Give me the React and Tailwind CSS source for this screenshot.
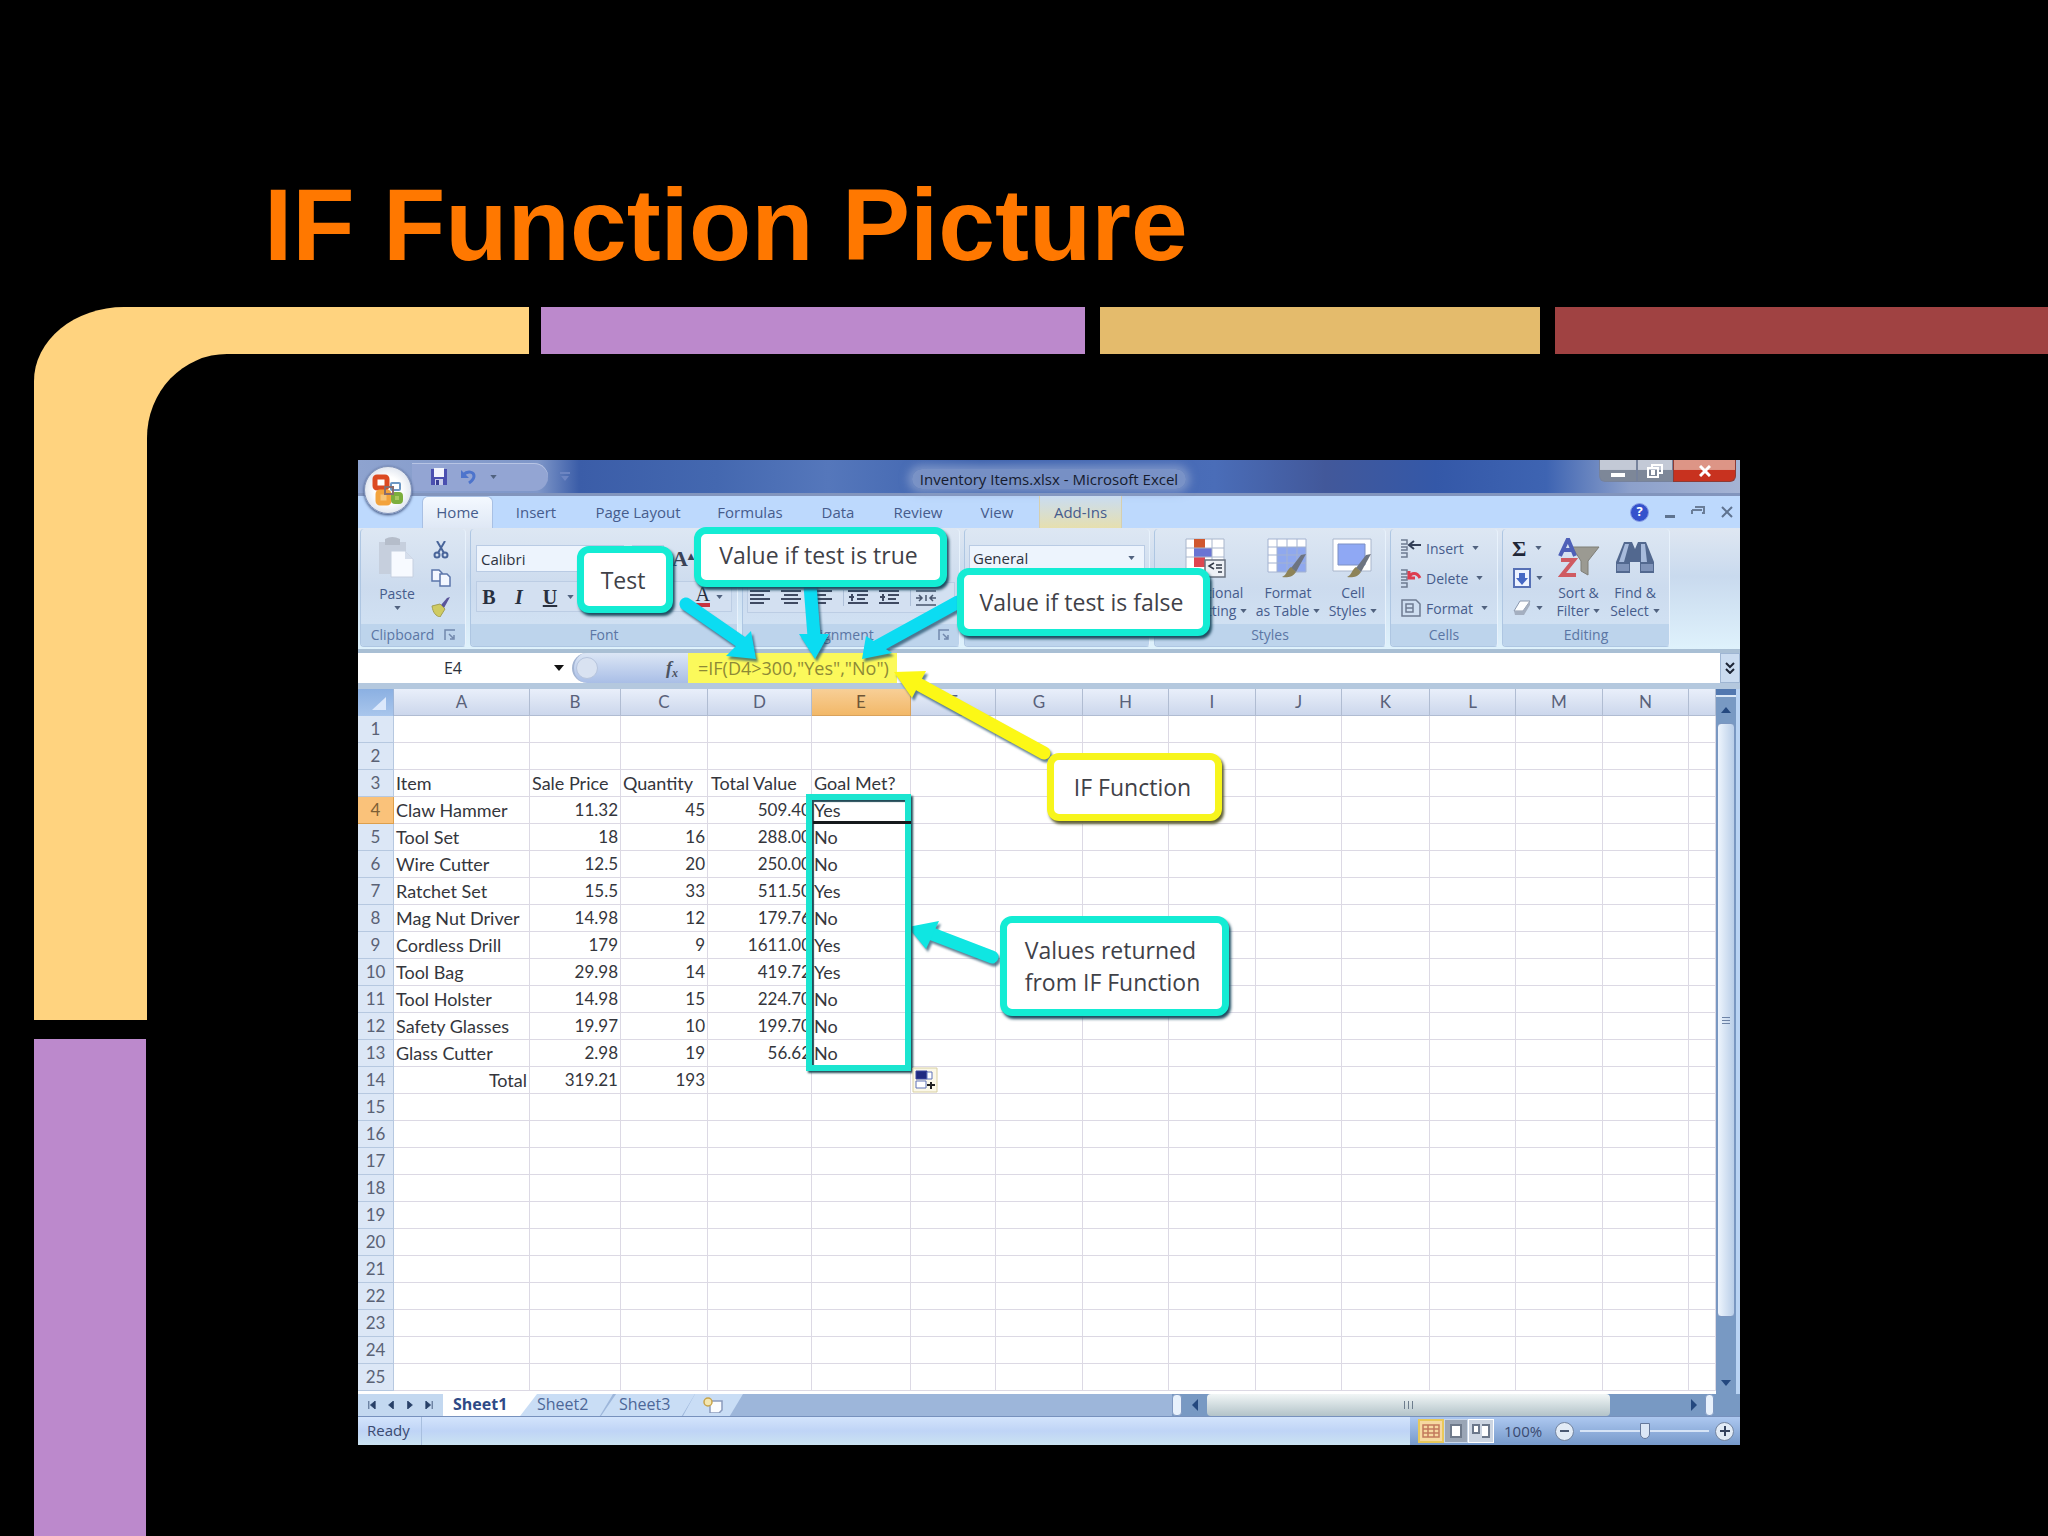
import React from "react";

const columns = ["A", "B", "C", "D", "E", "F", "G", "H", "I", "J", "K", "L", "M", "N", ""];
const columnWidths = [136, 91, 87, 104, 99, 85, 87, 86, 87, 86, 88, 86, 87, 86];

const sheet = {
  3: ["Item", "Sale Price", "Quantity", "Total Value", "Goal Met?"],
  4: ["Claw Hammer", "11.32", "45", "509.40", "Yes"],
  5: ["Tool Set", "18", "16", "288.00", "No"],
  6: ["Wire Cutter", "12.5", "20", "250.00", "No"],
  7: ["Ratchet Set", "15.5", "33", "511.50", "Yes"],
  8: ["Mag Nut Driver", "14.98", "12", "179.76", "No"],
  9: ["Cordless Drill", "179", "9", "1611.00", "Yes"],
  10: ["Tool Bag", "29.98", "14", "419.72", "Yes"],
  11: ["Tool Holster", "14.98", "15", "224.70", "No"],
  12: ["Safety Glasses", "19.97", "10", "199.70", "No"],
  13: ["Glass Cutter", "2.98", "19", "56.62", "No"],
  14: ["Total", "319.21", "193"],
};

function Caret({ className = "" }) {
  return (
    <svg viewBox="0 0 8 5" className={`inline-block h-[4px] w-[7px] shrink-0 fill-[#51627f] ${className}`} aria-hidden="true">
      <path d="M0 0h8L4 5z" />
    </svg>
  );
}

function TitleBar() {
  return (
    <div className="flex h-[36px] items-start justify-between border-b-[3px] border-[#8295bd] bg-[linear-gradient(90deg,#8ea3cf_0%,#7f97c9_13%,#3b5da8_16%,#4468b0_26%,#5577bb_34%,#3d62ae_45%,#4a6db8_62%,#42589a_70%,#3458a8_78%,#3e64b2_86%,#8ca0cb_92%,#a5b4d4_100%)]">
      <div className="flex h-full w-[300px] items-center">
        <div className="ml-[54px] flex h-[28px] w-[136px] items-center gap-3 rounded-r-2xl bg-[#93a5d3] pl-[18px] shadow-[inset_0_1px_0_#b7c4e4]">
          <button aria-label="Save">
            <svg viewBox="0 0 18 18" className="h-[18px] w-[18px]">
              <path d="M1 1h16v16H1z" fill="#4a4fb0" />
              <path d="M4 0h10v9H4z" fill="#f2f4fd" />
              <path d="M5 11h8v6H5z" fill="#c9cdea" />
              <path d="M6 12h3v5H6z" fill="#3a3f96" />
            </svg>
          </button>
          <button aria-label="Undo">
            <svg viewBox="0 0 18 16" className="h-[16px] w-[18px]" fill="none" stroke="#4d74cc" strokeWidth="3">
              <path d="M3 6c5-5 11-3 11 1 0 3-2 5-5 7" />
              <path d="M1 1v8h8z" fill="#4d74cc" stroke="none" />
            </svg>
          </button>
          <Caret />
        </div>
        <svg viewBox="0 0 10 9" className="ml-3 h-[9px] w-[10px]" aria-hidden="true">
          <path d="M0 0h10v2H0zM1 4h8L5 9z" fill="#6d85c2" />
        </svg>
      </div>
      <h2 className="mt-[9px] rounded-full bg-[#8ea3cd]/70 px-2 text-[15px] leading-[20px] text-[#151b2e] shadow-[0_0_8px_4px_#8ea3cdb3]">
        Inventory Items.xlsx - Microsoft Excel
      </h2>
      <div className="flex w-[300px] justify-end pr-1">
        <button aria-label="Minimize" className="flex h-[22px] w-[38px] items-end justify-center rounded-bl-md border border-t-0 border-[#76829c] bg-linear-to-b from-[#c3c9d6] from-45% to-[#7d8798] to-50% pb-1">
          <span className="h-[4px] w-[14px] bg-white" />
        </button>
        <button aria-label="Restore" className="flex h-[22px] w-[36px] items-center justify-center border border-t-0 border-[#76829c] bg-linear-to-b from-[#c3c9d6] from-45% to-[#7d8798] to-50%">
          <svg viewBox="0 0 16 14" className="h-[14px] w-[16px]" fill="none" stroke="#fff" strokeWidth="2">
            <path d="M5 3V1h10v8h-3" />
            <path d="M1 4h10v9H1zM5 7h2v3H5z" />
          </svg>
        </button>
        <button aria-label="Close" className="flex h-[22px] w-[63px] items-center justify-center rounded-br-md border border-t-0 border-[#8d3b35] bg-linear-to-b from-[#dd9586] from-45% to-[#c8321f] to-50%">
          <svg viewBox="0 0 12 12" className="h-[12px] w-[12px]" stroke="#fff" strokeWidth="3">
            <path d="M1 1l10 10M11 1L1 11" />
          </svg>
        </button>
      </div>
    </div>
  );
}

function OfficeButton() {
  return (
    <button aria-label="Office Button" className="absolute left-[6px] top-[6px] flex h-[48px] w-[48px] items-center justify-center rounded-full border border-[#8293b8] bg-[radial-gradient(circle,#ffffff_40%,#dfe5ef_75%,#b4c0d6)] shadow-[0_1px_3px_#30436f]">
      <svg viewBox="0 0 32 32" className="h-[32px] w-[32px]" fill="none" strokeWidth="5">
        <rect x="3" y="3" width="12" height="11" rx="2" stroke="#dc4a22" />
        <rect x="19" y="9" width="9" height="7" rx="1" stroke="#6c97c4" strokeWidth="2" />
        <rect x="6" y="18" width="11" height="11" rx="2" stroke="#f3a33c" fill="#f6c478" />
        <rect x="21" y="20" width="8" height="8" rx="2" stroke="#7cae3c" fill="#a8c860" strokeWidth="4" />
        <path d="M13 13h8v7h-8z" stroke="#8a6d6d" strokeWidth="2" />
      </svg>
    </button>
  );
}

const tabs = [
  ["Insert", "w-[86px]"],
  ["Page Layout", "w-[118px]"],
  ["Formulas", "w-[106px]"],
  ["Data", "w-[70px]"],
  ["Review", "w-[90px]"],
  ["View", "w-[68px]"],
];

function RibbonTabs() {
  return (
    <nav className="flex h-[32px] items-stretch bg-[#bdd9fd] pl-[64px] text-[15px] text-[#465c8c]">
      <button className="w-[71px] rounded-t-md border border-b-0 border-[#a8c0e4] bg-linear-to-b from-[#f4f9ff] to-[#dfe8f5]">Home</button>
      {tabs.map(([name, width]) => (
        <button key={name} className={width}>{name}</button>
      ))}
      <button className="ml-2 w-[83px] border-x border-[#d6cfae] bg-linear-to-b from-[#c9dcf2] to-[#e6dfae]">Add-Ins</button>
      <div className="ml-auto flex items-center gap-[16px] pr-[7px]">
        <button aria-label="Help" className="flex h-[19px] w-[19px] items-center justify-center rounded-full border border-[#8aa0e6] bg-[#3552cc] text-[13px] font-bold text-white">?</button>
        <button aria-label="Minimize workbook" className="mt-2 h-[3px] w-[10px] bg-[#5f738f]" />
        <button aria-label="Restore workbook">
          <svg viewBox="0 0 14 12" className="h-[12px] w-[14px]" fill="none" stroke="#6a7d98" strokeWidth="2">
            <path d="M1 4h10M1 4v4M11 7h2V1H4" />
          </svg>
        </button>
        <button aria-label="Close workbook">
          <svg viewBox="0 0 12 12" className="h-[12px] w-[12px]" stroke="#5f738f" strokeWidth="2">
            <path d="M1 1l10 10M11 1L1 11" />
          </svg>
        </button>
      </div>
    </nav>
  );
}

function Group({ label, width, launcher, children }) {
  return (
    <section className={`flex h-[118px] shrink-0 flex-col overflow-hidden rounded-sm border border-t-0 border-[#aec6e2] border-r-[#e8f2fc] bg-linear-to-b from-[#dde7f3] via-[#ccdbee] to-[#d3e4f5] ${width}`}>
      <div className="flex-1">{children}</div>
      <div className="flex h-[22px] items-center bg-[#bdd4ec] text-[14px] leading-none text-[#5b76a4]">
        <span className="flex-1 text-center">{label}</span>
        {launcher && (
          <button aria-label="More options" className="mr-[9px]">
            <svg viewBox="0 0 12 12" className="h-[12px] w-[12px]" fill="none" stroke="#7288ad" strokeWidth="1.5">
              <path d="M1 11V1h10M5 5l4 4M10 6v4H6" />
            </svg>
          </button>
        )}
      </div>
    </section>
  );
}

function LinesIcon({ indent }) {
  return (
    <svg viewBox="0 0 20 16" className="h-[16px] w-[20px]" stroke="#3f4a62" strokeWidth="2" aria-hidden="true">
      {indent === "in" ? (
        <path d="M0 1h20M9 5h11M9 9h8M0 13h20M1 7h5M4 4v7" />
      ) : indent === "center" ? (
        <path d="M0 1h20M3 5h14M0 9h20M3 13h14" />
      ) : (
        <path d="M0 1h20M0 5h14M0 9h20M0 13h14" />
      )}
    </svg>
  );
}

function BigButton({ icon, first, second, width }) {
  return (
    <button className={`flex shrink-0 flex-col items-center text-[14px] leading-[18px] text-[#465c8c] ${width}`}>
      {icon}
      <span className="mt-[6px] whitespace-nowrap">{first}</span>
      <span className="flex items-center gap-1 whitespace-nowrap">{second}<Caret /></span>
    </button>
  );
}

function Brush() {
  return (
    <g>
      <path d="M39 16l-5 1-10 13 5 4z" fill="#6d7480" />
      <path d="M24 29l5 5c-3 5-9 6-14 5 5-2 5-8 9-10z" fill="#8d8358" />
    </g>
  );
}

function Ribbon() {
  return (
    <div className="flex h-[125px] items-start gap-[4px] border-b-[4px] border-[#a9bfd4] bg-[linear-gradient(180deg,#dfe7f2,#c9daee_40%,#dff2fc)] pl-[2px] pt-px">
      <Group label="Clipboard" width="w-[106px]" launcher>
        <div className="flex justify-between pl-[16px] pr-[14px] pt-[8px]">
          <button className="flex flex-col items-center text-[14px] leading-[18px] text-[#465c8c]">
            <svg viewBox="0 0 40 42" className="h-[42px] w-[40px]">
              <path d="M2 5h27v32H2z" fill="#c6cfdd" />
              <path d="M8 2q7-4 15 0v6H8z" fill="#b5bdca" />
              <path d="M14 14h14l8 8v18H14z" fill="#f7faff" stroke="#c6d0e0" />
              <path d="M28 14v8h8" fill="#d5deec" />
            </svg>
            <span className="mt-[6px]">Paste</span>
            <Caret className="mt-[3px]" />
          </button>
          <div className="flex flex-col items-center gap-[10px] pt-[4px]">
            <button aria-label="Cut">
              <svg viewBox="0 0 16 18" className="h-[18px] w-[16px]" fill="none" stroke="#49659a" strokeWidth="2">
                <path d="M4 0l7 12M12 0L5 12" />
                <circle cx="4" cy="14" r="2.5" />
                <circle cx="12" cy="14" r="2.5" />
              </svg>
            </button>
            <button aria-label="Copy">
              <svg viewBox="0 0 20 18" className="h-[18px] w-[20px]" fill="#f3f7ff" stroke="#5b75aa" strokeWidth="1.5">
                <path d="M1 1h7l3 3v8H1z" />
                <path d="M9 5h7l3 3v9H9z" />
              </svg>
            </button>
            <button aria-label="Format Painter">
              <svg viewBox="0 0 20 20" className="h-[20px] w-[20px]">
                <path d="M19 0l-3 1-6 7 3 3z" fill="#5a5599" />
                <path d="M1 9l8-2 5 5-5 8c-4-1-7-4-8-11z" fill="#cfcb62" stroke="#a39f52" />
              </svg>
            </button>
          </div>
        </div>
      </Group>
      <Group label="Font" width="w-[268px]">
        <div className="px-[5px] pt-[16px]">
          <div className="flex items-center gap-2">
            <input aria-label="Font name" readOnly value="Calibri" className="h-[27px] w-[148px] border border-[#b9cbe4] bg-[#edf4fd] px-1 text-[15px] text-[#2e3340]" />
            <input aria-label="Font size" readOnly value="11" className="h-[27px] w-[32px] border border-[#b9cbe4] bg-[#edf4fd] px-1 text-[15px] text-[#2e3340]" />
            <button aria-label="Grow Font" className="font-['Liberation_Serif',serif] text-[22px] font-bold leading-none text-[#3a4357]">A<sup className="text-[12px]">▴</sup></button>
          </div>
          <div className="mt-[9px] flex h-[31px] items-center border border-[#bccde4] bg-[#d3e0f1] font-['Liberation_Serif',serif] text-[20px] text-[#28303f]">
            <button className="w-[24px] font-bold">B</button>
            <button className="w-[36px] font-bold italic">I</button>
            <button className="w-[26px] font-bold underline">U</button>
            <Caret className="ml-1" />
            <button aria-label="Font Color" className="ml-auto mr-[2px] flex items-center">
              <span className="border-b-4 border-[#c73340] leading-[17px]">A</span>
              <Caret className="mx-[6px]" />
            </button>
          </div>
        </div>
      </Group>
      <Group label="Alignment" width="w-[218px]" launcher>
        <div className="px-[4px] pt-[53px]">
          <div className="flex h-[31px] items-center gap-[11px] border border-[#bccde4] bg-[#d3e0f1] pl-[2px]">
            <button aria-label="Align Left"><LinesIcon /></button>
            <button aria-label="Center"><LinesIcon indent="center" /></button>
            <button aria-label="Align Right"><LinesIcon /></button>
            <button aria-label="Decrease Indent" className="border-l border-[#aebfd8] pl-1"><LinesIcon indent="in" /></button>
            <button aria-label="Increase Indent"><LinesIcon indent="in" /></button>
            <button aria-label="Merge and Center" className="border-l border-[#aebfd8] pl-1">
              <svg viewBox="0 0 22 16" className="h-[16px] w-[22px]" fill="none" stroke="#4a566e" strokeWidth="1.5">
                <path d="M1 1h20M1 15h20M1 8h5M4 5l3 3-3 3M21 8h-5M18 5l-3 3 3 3M11 5v6" />
              </svg>
            </button>
          </div>
        </div>
      </Group>
      <Group label="" width="w-[186px]">
        <div className="relative px-[4px] pt-[16px]">
          <select aria-label="Number format" className="h-[27px] w-full appearance-none border border-[#b9cbe4] bg-[#edf4fd] px-[3px] text-[15px] text-[#2e3340]">
            <option>General</option>
          </select>
          <Caret className="absolute right-[14px] top-[27px]" />
        </div>
      </Group>
      <Group label="Styles" width="w-[232px]">
        <div className="flex pl-[5px] pt-[9px]">
          <BigButton
            width="w-[92px]"
            first="Conditional"
            second="Formatting"
            icon={
              <svg viewBox="0 0 42 40" className="h-[40px] w-[42px]">
                <path d="M1 1h38v32H1z" fill="#fff" stroke="#a9b6cc" />
                <path d="M9 1h11v9H9z" fill="#d0582f" />
                <path d="M9 10h18v9H9z" fill="#6a74d3" />
                <path d="M9 19h11v10H9z" fill="#dd4650" />
                <path d="M1 10h38M1 19h38M27 1v32" stroke="#a9b6cc" fill="none" />
                <path d="M20 22h20v17H20z" fill="#eef1f6" stroke="#6a7280" strokeWidth="1.5" />
                <path d="M29 25l-5 3 5 3M31 27h6M31 30h6M33 34h4" stroke="#333b49" strokeWidth="1.5" fill="none" />
              </svg>
            }
          />
          <BigButton
            width="w-[72px]"
            first="Format"
            second="as Table"
            icon={
              <svg viewBox="0 0 42 40" className="h-[40px] w-[42px]">
                <path d="M1 1h38v33H1z" fill="#fff" />
                <path d="M10 9h29v25H10z" fill="#8fa8ee" />
                <path d="M1 1h38v33H1zM1 9h38M1 17h38M1 25h38M10 1v33M20 1v33M30 1v33" stroke="#a3b2d0" fill="none" />
                <Brush />
              </svg>
            }
          />
          <BigButton
            width="w-[58px]"
            first="Cell"
            second="Styles"
            icon={
              <svg viewBox="0 0 42 40" className="h-[40px] w-[42px]">
                <path d="M1 1h38v32H1z" fill="#fff" stroke="#a9b6cc" />
                <path d="M6 6h27v21H6z" fill="#8fa8f4" stroke="#7d90c4" />
                <Brush />
              </svg>
            }
          />
        </div>
      </Group>
      <Group label="Cells" width="w-[108px]">
        <div className="flex flex-col gap-[2px] pl-[9px] pt-[5px] text-[14px] text-[#465c8c]">
          {["Insert", "Delete", "Format"].map((name, i) => (
            <button key={name} className="flex h-[28px] items-center gap-[4px]">
              <svg viewBox="0 0 22 20" className="h-[20px] w-[22px]" fill="none" stroke="#6e7b91" strokeWidth="1.5">
                {i < 2 ? <path d="M1 2h6v4H1M1 9h6v3H1M1 15h6v4H1" /> : <path d="M2 2h14l4 4v12H2zM6 6h7v8H6zM6 10h7" />}
                {i === 0 && <path d="M21 7H10M14 3l-5 4 5 4" stroke="#333f57" strokeWidth="2" />}
                {i === 1 && <path d="M9 10c2-6 8-6 11 0M9 3v7h6" stroke="#dd3d50" strokeWidth="3" />}
              </svg>
              {name}
              <Caret className="ml-[4px]" />
            </button>
          ))}
        </div>
      </Group>
      <Group label="Editing" width="w-[168px]">
        <div className="flex">
          <div className="flex w-[48px] flex-col gap-[2px] pl-[9px] pt-[5px]">
            <button aria-label="AutoSum" className="flex h-[28px] items-center gap-[9px] font-['Liberation_Serif',serif] text-[22px] font-bold text-[#1f2637]">Σ<Caret /></button>
            <button aria-label="Fill" className="flex h-[28px] items-center gap-[4px]">
              <svg viewBox="0 0 20 20" className="h-[20px] w-[20px]">
                <path d="M2 1h16v18H2z" fill="#eef3ff" stroke="#5670b5" strokeWidth="2" />
                <path d="M7 5h6v5h3l-6 7-6-7h3z" fill="#4668c4" />
              </svg>
              <Caret />
            </button>
            <button aria-label="Clear" className="flex h-[28px] items-center gap-[4px]">
              <svg viewBox="0 0 20 16" className="h-[16px] w-[20px]">
                <path d="M8 1h10l-7 10H2z" fill="#fdfeff" stroke="#8b98ad" />
                <path d="M2 11h9l7-10v4l-6 10H3z" fill="#a4afc0" />
              </svg>
              <Caret />
            </button>
          </div>
          <div className="flex pt-[9px]">
            <BigButton
              width="w-[55px]"
              first="Sort &"
              second="Filter"
              icon={
                <svg viewBox="0 0 42 40" className="h-[40px] w-[42px]">
                  <path d="M14 9h27L30 23v14l-7-4V23z" fill="#9b9a92" stroke="#7f7e77" />
                  <path d="M2 18L10 1l7 17M5 12h9" fill="none" stroke="#4e60b8" strokeWidth="4" />
                  <path d="M3 22h13L4 37h14" fill="none" stroke="#cf5b62" strokeWidth="4" />
                </svg>
              }
            />
            <BigButton
              width="w-[58px]"
              first="Find &"
              second="Select"
              icon={
                <svg viewBox="0 0 42 40" className="h-[40px] w-[42px]">
                  <path d="M10 4h8l3 7 3-7h8l8 20v11H26V24H16v11H2V24z" fill="#52688f" />
                  <path d="M11 6h4l-5 18H5zM27 6h4l2 18h-6z" fill="#a8bbdc" />
                  <path d="M3 26h12v7H3zM27 26h12v7H27z" fill="#7e92b8" />
                </svg>
              }
            />
          </div>
        </div>
      </Group>
    </div>
  );
}

function FormulaBar() {
  return (
    <div className="flex h-[30px] items-stretch bg-white text-[16px] text-[#2d313b]">
      <label className="flex w-[214px] items-center">
        <input aria-label="Name Box" readOnly value="E4" className="w-[190px] bg-transparent text-center" />
        <svg viewBox="0 0 10 6" className="ml-[6px] h-[6px] w-[10px]" aria-hidden="true"><path d="M0 0h10L5 6z" fill="#111" /></svg>
      </label>
      <div className="flex w-[116px] items-center justify-between rounded-l-full border-l-2 border-[#a3b4d2] bg-linear-to-b from-[#dce6f5] to-[#a9bee6] pl-[2px] pr-[10px]">
        <span className="h-[22px] w-[22px] rounded-full border border-[#b6c4dd] bg-[#d9e2f1]" />
        <button className="font-['Liberation_Serif',serif] text-[18px] font-bold italic text-[#4b5260]">f<sub className="text-[12px]">x</sub></button>
      </div>
      <div className="flex flex-1">
        <input aria-label="Formula" readOnly value={'=IF(D4>300,"Yes","No")'} className="w-[209px] bg-[#fbf95b] pl-[10px] text-[18px] text-[#8d8936]" />
      </div>
      <button aria-label="Expand Formula Bar" className="flex w-[20px] items-center justify-center border border-[#9fb6d3] bg-[#cbdcf0]">
        <svg viewBox="0 0 10 12" className="h-[12px] w-[10px]" fill="none" stroke="#1d2535" strokeWidth="2">
          <path d="M1 1l4 4 4-4M1 7l4 4 4-4" />
        </svg>
      </button>
    </div>
  );
}

function cellStyle(row, col) {
  if (row === 3 || col === 4) return "text-left text-[18px]";
  if (col === 0) return row === 14 ? "text-right text-[18px]" : "text-left text-[18px]";
  return "text-right";
}

function Grid() {
  const rows = Array.from({ length: 25 }, (_, i) => i + 1);
  return (
    <div className="flex border-t-[6px] border-[#b4c8de] bg-white">
      <div className="min-w-0 flex-1 pb-[3px]">
        <table className="w-full table-fixed border-separate border-spacing-0 font-['Lato',sans-serif] text-[17px] leading-[20px] text-[#34363c]">
          <colgroup>
            <col style={{ width: 36 }} />
            {columnWidths.map((w, i) => (
              <col key={i} style={{ width: w }} />
            ))}
            <col />
          </colgroup>
          <thead>
            <tr className="h-[27px]">
              <th className="border-r border-[#9db5d8] bg-linear-to-b from-[#8bb0e2] to-[#a9c6ec] p-0">
                <svg viewBox="0 0 34 24" className="h-[24px] w-[34px]" aria-hidden="true"><path d="M28 6v13H14z" fill="#dbe8fb" /></svg>
              </th>
              {columns.map((c, i) => (
                <th
                  key={i}
                  scope="col"
                  className={`border-b border-r p-0 text-center font-normal ${
                    c === "E"
                      ? "border-[#d9a25c] bg-linear-to-b from-[#f8cf96] to-[#f2b868] text-[#6e5536]"
                      : "border-[#b0bcd2] bg-linear-to-b from-[#e9effa] to-[#ccd7ec] text-[#59617a]"
                  }`}
                >
                  {c}
                </th>
              ))}
            </tr>
          </thead>
          <tbody>
            {rows.map((r) => (
              <tr key={r} className="h-[27px]">
                <th
                  scope="row"
                  className={`border-b border-r p-0 text-center font-normal ${
                    r === 4 ? "border-[#dd9f4c] bg-[#fac27a] text-[#7d5f35]" : "border-[#b6c8e0] bg-[#dce7f6] text-[#5a6275]"
                  }`}
                >
                  {r}
                </th>
                {columns.map((c, i) => (
                  <td
                    key={i}
                    className={`whitespace-nowrap border-b border-r border-[#dcd9e4] py-0 ${i === 3 ? "pl-[3px] pr-0" : "px-[2px]"} ${cellStyle(r, i)}`}
                  >
                    {sheet[r]?.[i] ?? ""}
                  </td>
                ))}
              </tr>
            ))}
          </tbody>
        </table>
      </div>
      <div className="flex w-[20px] flex-col items-center bg-[#7899c3]" aria-hidden="true">
        <div className="h-[8px] w-full border-b-2 border-[#dce9f8] bg-[#5278b0]" />
        <svg viewBox="0 0 10 6" className="my-[10px] h-[6px] w-[10px]"><path d="M5 0l5 6H0z" fill="#24487f" /></svg>
        <div className="flex h-[594px] w-[18px] flex-col items-center justify-center gap-[2px] rounded-sm border border-[#7b96c0] bg-linear-to-r from-[#eef5fd] to-[#b9cee8]">
          <span className="h-px w-[8px] bg-[#6d83a6]" />
          <span className="h-px w-[8px] bg-[#6d83a6]" />
          <span className="h-px w-[8px] bg-[#6d83a6]" />
        </div>
        <svg viewBox="0 0 10 6" className="mb-[8px] mt-auto h-[6px] w-[10px]"><path d="M0 0h10L5 6z" fill="#24487f" /></svg>
      </div>
      <div className="w-[4px] bg-[#b9d3f3]" />
    </div>
  );
}

function SheetTabs() {
  return (
    <div className="flex h-[23px] items-stretch border-b border-[#7791bd] bg-[#9db6da] text-[16px] leading-none">
      <div className="flex w-[85px] items-center justify-around bg-[#c3d8f0] px-[4px]">
        {["M2 0v10M10 0L4 5l6 5z", "M9 0L3 5l6 5z", "M3 0l6 5-6 5z", "M10 0v10M2 0l6 5-6 5z"].map((d) => (
          <button key={d} aria-label="Scroll sheets">
            <svg viewBox="0 0 12 10" className="h-[8px] w-[10px]" fill="#284067" stroke="#284067"><path d={d} /></svg>
          </button>
        ))}
      </div>
      <button className="z-10 w-[94px] bg-white pb-[2px] pl-[10px] text-left font-bold text-[#2f4a86] [clip-path:polygon(0_0,100%_0,82%_100%,0_100%)]">Sheet1</button>
      <button className="-ml-[18px] w-[94px] bg-[#c9ddf5] pb-[2px] pl-[18px] text-left text-[#4d6798] [clip-path:polygon(16%_0,100%_0,86%_100%,0_100%)]">Sheet2</button>
      <button className="-ml-[12px] w-[94px] bg-[#c9ddf5] pb-[2px] pl-[18px] text-left text-[#4d6798] [clip-path:polygon(16%_0,100%_0,86%_100%,0_100%)]">Sheet3</button>
      <button aria-label="Insert Worksheet" className="-ml-[12px] flex w-[60px] items-center justify-center bg-[#c9ddf5] [clip-path:polygon(20%_0,100%_0,78%_100%,0_100%)]">
        <svg viewBox="0 0 22 16" className="h-[16px] w-[22px]">
          <path d="M8 4h12v9l-3 3H8z" fill="#fafcff" stroke="#8b9bbd" strokeWidth="1.5" />
          <circle cx="6" cy="5" r="4" fill="#f3e6b0" stroke="#c8a44a" strokeWidth="1.5" />
        </svg>
      </button>
      <div className="ml-auto flex w-[568px] items-stretch bg-[#7899c3]">
        <span className="w-[10px] rounded-sm border border-[#7f98c1] bg-[#e8f1fc]" />
        <button aria-label="Scroll left" className="flex w-[25px] items-center justify-center">
          <svg viewBox="0 0 6 12" className="h-[12px] w-[6px]"><path d="M6 0v12L0 6z" fill="#24487f" /></svg>
        </button>
        <div className="flex w-[403px] items-center justify-center gap-[3px] rounded-sm bg-linear-to-b from-[#f1f6f6] to-[#b3c3c9]">
          <span className="h-[8px] w-px bg-[#6d7d8d]" />
          <span className="h-[8px] w-px bg-[#6d7d8d]" />
          <span className="h-[8px] w-px bg-[#6d7d8d]" />
        </div>
        <button aria-label="Scroll right" className="ml-auto mr-[8px]">
          <svg viewBox="0 0 6 12" className="h-[12px] w-[6px]"><path d="M0 0v12l6-6z" fill="#24487f" /></svg>
        </button>
        <span className="mr-[26px] w-[9px] rounded-sm border border-[#7f98c1] bg-[#e8f1fc]" />
      </div>
    </div>
  );
}

function StatusBar() {
  return (
    <div className="flex h-[28px] items-stretch justify-between bg-linear-to-b from-[#d3e4fc] via-[#bfd4f6] to-[#cbe3f1] text-[15px] text-[#3a4a70]">
      <div className="flex w-[64px] items-center border-r border-[#a8bfdf] pb-[2px] pl-[9px]">Ready</div>
      <div className="flex w-[330px] items-center bg-linear-to-b from-[#adc8f0] to-[#7699ca] pl-[8px] pr-[6px]">
        <button aria-label="Normal view" className="flex h-[24px] w-[26px] items-center justify-center border-2 border-[#e9c95a] bg-[#f6d9a0]">
          <svg viewBox="0 0 18 14" className="h-[14px] w-[18px]" fill="none" stroke="#c27a5c" strokeWidth="1.5"><path d="M1 1h16v12H1zM1 5h16M1 9h16M6 1v12M12 1v12" /></svg>
        </button>
        <button aria-label="Page Layout view" className="flex h-[24px] w-[24px] items-center justify-center border border-[#c9d7ea] bg-[#9aa5b5]">
          <span className="h-[14px] w-[12px] border-2 border-[#6f7a8b] bg-white" />
        </button>
        <button aria-label="Page Break Preview" className="flex h-[24px] w-[26px] items-center justify-center border border-white bg-[#ccd5e2]">
          <svg viewBox="0 0 18 14" className="h-[14px] w-[18px]" fill="#fff" stroke="#6c788b" strokeWidth="2"><path d="M1 1h6v8H1zM10 1h7v12h-7" /></svg>
        </button>
        <span className="ml-[10px] w-[51px]">100%</span>
        <button aria-label="Zoom out" className="flex h-[19px] w-[19px] items-center justify-center rounded-full border border-[#7485a0] bg-[#e2ebf6]"><span className="h-[2px] w-[9px] bg-[#4b5972]" /></button>
        <input
          aria-label="Zoom"
          type="range"
          defaultValue="50"
          className="mx-[6px] h-[16px] min-w-0 flex-1 appearance-none bg-[linear-gradient(#d6e4f6,#d6e4f6)] bg-[length:100%_2px] bg-center bg-no-repeat [&::-webkit-slider-thumb]:h-[16px] [&::-webkit-slider-thumb]:w-[10px] [&::-webkit-slider-thumb]:appearance-none [&::-webkit-slider-thumb]:rounded-b-full [&::-webkit-slider-thumb]:border [&::-webkit-slider-thumb]:border-[#64779a] [&::-webkit-slider-thumb]:bg-[#dbe6f5]"
        />
        <button aria-label="Zoom in" className="flex h-[19px] w-[19px] items-center justify-center rounded-full border border-[#7485a0] bg-[#e2ebf6]">
          <svg viewBox="0 0 10 10" className="h-[10px] w-[10px]" stroke="#35435e" strokeWidth="2"><path d="M0 5h10M5 0v10" /></svg>
        </button>
      </div>
    </div>
  );
}

function Callout({ className, children }) {
  return (
    <div className={`absolute flex items-center justify-center rounded-xl border-[7px] bg-white pr-[4px] text-[23px] leading-[32px] text-[#3f4148] ${className}`}>
      <span className="whitespace-nowrap">{children}</span>
    </div>
  );
}

function Annotations() {
  return (
    <>
      <svg viewBox="0 0 1382 984" className="pointer-events-none absolute left-0 top-0 h-[984px] w-[1382px] drop-shadow-[2px_3px_1px_#1b4a66b0]" aria-hidden="true">
        <g stroke="#0bdcf2" fill="#0bdcf2" strokeWidth="13" strokeLinecap="round">
          <path d="M328 144L383 182" />
          <path d="M452 125L456 176" />
          <path d="M600 142L520 186" />
          <path d="M634 497L574 474" stroke="#0fe6e2" />
          <g stroke="none">
            <path d="M393 171L368 196L398 199z" />
            <path d="M441 174L471 174L457 199z" />
            <path d="M508 176L504 199L534 193z" />
            <path d="M550 467L581 461L568 489z" fill="#0fe6e2" />
          </g>
        </g>
        <path d="M686 293L562 225" stroke="#fcf816" strokeWidth="13" strokeLinecap="round" />
        <path d="M536 212L568 211L554 238z" fill="#fcf816" />
      </svg>
      <div className="absolute left-[448px] top-[334px] h-[277px] w-[105px] border-[6px] border-[#1be5d0] shadow-[2px_2px_2px_#234b57,inset_2px_2px_1px_#234b57]" />
      <div className="absolute left-[455px] top-[361px] h-[3px] w-[98px] bg-[#16191c]" />
      <Callout className="left-[219px] top-[86px] h-[67px] w-[96px] border-[#14ecd4] shadow-[2px_3px_3px_#1c4b60]">Test</Callout>
      <Callout className="left-[336px] top-[67px] h-[60px] w-[253px] border-[#14ecd4] pb-[4px] shadow-[2px_3px_3px_#1c4b60]">Value if test is true</Callout>
      <Callout className="left-[599px] top-[108px] h-[68px] w-[253px] border-[#14ecd4] shadow-[2px_3px_3px_#1c4b60]">Value if test is false</Callout>
      <Callout className="left-[689px] top-[293px] h-[68px] w-[175px] border-[#f7f51c] shadow-[2px_3px_3px_#5c5c30]">IF Function</Callout>
      <Callout className="left-[642px] top-[456px] h-[100px] w-[229px] border-[#14ecd4] shadow-[2px_3px_3px_#1c4b60]">Values returned<br />from IF Function</Callout>
      <svg viewBox="0 0 26 26" className="absolute left-[554px] top-[607px] h-[26px] w-[26px]" aria-hidden="true">
        <path d="M1 1h24v24H1z" fill="#fbf8e8" stroke="#d8cfa0" />
        <path d="M4 4h11v8H4z" fill="#202a80" stroke="#3945a0" />
        <path d="M15 5h5v7h-5zM4 14h10v7H4z" fill="#fff" stroke="#5f72b8" />
        <path d="M19 15v7M15 18h8" stroke="#222" strokeWidth="2" />
      </svg>
    </>
  );
}

function ExcelWindow() {
  return (
    <div className="relative mb-[92px] ml-[211px] mr-[308px] mt-[106px] overflow-hidden bg-[#bdd9fd] font-['Open_Sans',sans-serif]">
      <TitleBar />
      <RibbonTabs />
      <Ribbon />
      <FormulaBar />
      <Grid />
      <SheetTabs />
      <StatusBar />
      <OfficeButton />
      <Annotations />
    </div>
  );
}

export default function App() {
  return (
    <main className="flex min-h-screen flex-col bg-black">
      <header className="flex h-[307px] items-end pb-[24px] pl-[264px]">
        <h1 className="font-['Liberation_Sans',sans-serif] text-[102px] font-bold leading-[116px] text-[#ff7800]">IF Function Picture</h1>
      </header>
      <div className="ml-[34px] flex flex-1 flex-col overflow-hidden rounded-tl-[90px_74px]">
        <div className="flex h-[47px]">
          <div className="w-[495px] bg-[#ffd37f]" />
          <div className="ml-[12px] flex-[544] bg-[#bc89cc]" />
          <div className="ml-[15px] flex-[440] bg-[#e4bb6c]" />
          <div className="ml-[15px] flex-[493] bg-[#a04242]" />
        </div>
        <div className="flex flex-1">
          <div className="flex w-[113px] shrink-0 flex-col gap-[19px]">
            <div className="h-[666px] bg-[#ffd37f]" />
            <div className="mr-px flex-1 bg-[#bc89cc]" />
          </div>
          <div className="relative min-w-0 flex-1">
            <div className="absolute left-0 top-0 h-[84px] w-[80px] bg-[#ffd37f]">
              <div className="h-full w-full rounded-tl-[80px_84px] bg-black" />
            </div>
            <ExcelWindow />
          </div>
        </div>
      </div>
    </main>
  );
}
